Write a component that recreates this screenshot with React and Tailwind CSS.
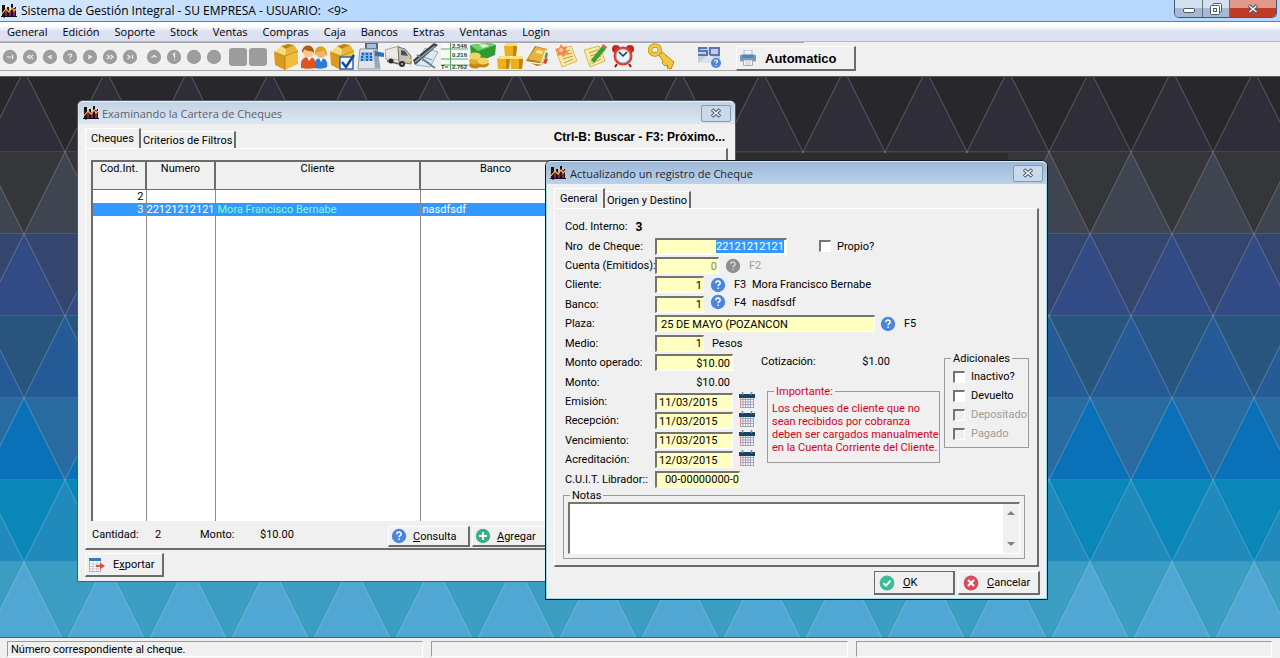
import React, { useEffect, useRef } from "react";

const menus = [
  "General",
  "Edición",
  "Soporte",
  "Stock",
  "Ventas",
  "Compras",
  "Caja",
  "Bancos",
  "Extras",
  "Ventanas",
  "Login",
];

/* Desktop rows, from top to bottom: [triangle pointing down, triangle pointing up] */
const rows = [
  ["#28272b", "#2f2d37"],
  ["#343639", "#3e4450"],
  ["#34466e", "#324b85"],
  ["#29547e", "#245a96"],
  ["#2a6ca2", "#0a71b8"],
  ["#0a87b8", "#218abd"],
  ["#3b9dc2", "#50a7d3"],
];

const raised =
  "border-t border-l border-b-2 border-r-2 border-t-white border-l-white border-b-[#6b6b6b] border-r-[#6b6b6b]";
const sunken =
  "border-t-2 border-l-2 border-b border-r border-t-[#76756c] border-l-[#76756c] border-b-white border-r-white";

/* ---------- icons ---------- */

const AppIcon = () => (
  <svg viewBox="0 0 16 16" className="w-4 h-4 shrink-0" aria-hidden="true">
    <path d="M1 2h3v11H1zM6 4h2v9H6zM10 1h2v12h-2zM14 4h1v9h-1z" fill="#1b1014" />
    <path d="M4 6h2v7H4zM8 7h2v6H8zM12 5h2v8h-2z" fill="#8d1f63" />
    <path d="M0 13.5h16" stroke="#1b1014" />
    <path d="M1 11l4-5 3 3 3-4 2 3 2-2" fill="none" stroke="#f2c12e" strokeWidth="1.2" />
    <path d="M3 10v5M11 11v3" stroke="#1b1014" />
  </svg>
);

const HelpIcon = ({ off }) => (
  <svg viewBox="0 0 16 16" className="w-4 h-4 shrink-0" aria-hidden="true">
    <circle cx="8" cy="8" r="7.2" fill={off ? "#8f8f8f" : "#4a86dc"} />
    <path
      d="M5.9 6.2c0-2.8 4.3-2.7 4.3-.2 0 1.6-2.1 1.6-2.1 3.2M8.1 10.6v1.5"
      fill="none"
      stroke={off ? "#d4d4d4" : "#fff"}
      strokeWidth="1.5"
    />
  </svg>
);

const PlusIcon = () => (
  <svg viewBox="0 0 16 16" className="w-4 h-4 shrink-0" aria-hidden="true">
    <circle cx="8" cy="8" r="7.2" fill="#35b183" />
    <path d="M8 4v8M4 8h8" stroke="#fff" strokeWidth="2" />
  </svg>
);

const CheckIcon = () => (
  <svg viewBox="0 0 16 16" className="w-4 h-4 shrink-0" aria-hidden="true">
    <circle cx="8" cy="8" r="7.4" fill="#3dba98" />
    <path d="M4.5 8.2l2.5 2.4 4.5-4.8" fill="none" stroke="#fff" strokeWidth="2" />
  </svg>
);

const CancelIcon = () => (
  <svg viewBox="0 0 16 16" className="w-4 h-4 shrink-0" aria-hidden="true">
    <circle cx="8" cy="8" r="7.4" fill="#dc4a5c" />
    <path d="M5 5l6 6M11 5l-6 6" stroke="#fff" strokeWidth="2.2" />
  </svg>
);

const ExportIcon = () => (
  <svg viewBox="0 0 16 14" className="w-4 h-3.5 shrink-0" aria-hidden="true">
    <rect x=".5" y=".5" width="11" height="13" fill="#fff" stroke="#a9b3bf" />
    <path d="M0 0h12v3H0z" fill="#3a78c3" />
    <path d="M1 6h11M1 8.5h11M1 11h11M4 3v10M8 3v10" stroke="#b3bcc8" strokeWidth=".8" />
    <path d="M7 7h4V4.500l5 3.500-5 3.500V9H7z" fill="#d9523f" />
  </svg>
);

const CalendarIcon = () => (
  <svg viewBox="0 0 16 16" className="w-4 h-4 shrink-0" aria-hidden="true">
    <rect x="1" y="4" width="14" height="12" fill="#fbfbfd" />
    <path
      d="M1 7.500h14M1 10h14M1 12.500h14M1 15.500h14M4 6v10M6.500 6v10M9 6v10M11.500 6v10M14.500 6v10"
      stroke="#8d93ab"
      strokeWidth=".8"
    />
    <path d="M1.500 6v10" stroke="#d9908d" />
    <path d="M0 2h16v4H0z" fill="#164467" />
    <path d="M3.500 0v3M12.500 0v3" stroke="#7c8794" strokeWidth="1.500" />
  </svg>
);

const PrinterIcon = () => (
  <svg viewBox="0 0 16 16" className="w-4 h-4 shrink-0" aria-hidden="true">
    <path d="M4 0h8v5H4z" fill="#eef4fa" stroke="#8fa5bb" strokeWidth=".8" />
    <rect x="0" y="4.500" width="16" height="7" rx="1.500" fill="#7c98b4" />
    <path d="M2.500 5h11v3h-11z" fill="#4b86bf" />
    <path d="M3.500 10h9v5.500h-9z" fill="#f7fafc" stroke="#8fa5bb" strokeWidth=".8" />
    <path d="M5 12h6M5 14h6" stroke="#a9bac9" strokeWidth=".8" />
  </svg>
);

const CloseGlyph = () => (
  <svg viewBox="0 0 12 10" className="w-3 h-2.5" aria-hidden="true">
    <path d="M2 1.500l8 7M10 1.500l-8 7" stroke="#4d5967" strokeWidth="3.600" />
    <path d="M2.500 2l7 6M9.500 2l-7 6" stroke="#f4f7fa" strokeWidth="1.600" />
  </svg>
);

/* Glyphs of the disabled record navigation buttons */
const navGlyphs = [
  ["Primero", "M5 8h4M10.500 6v4"],
  ["Retroceder página", "M8 6L5.500 8 8 10M11 6L8.500 8l2.500 2"],
  ["Anterior", "M9 6.500L6.500 8 9 9.500z"],
  ["Buscar", "M6.500 6.500c0-2 3.200-2 3.200 0 0 1.200-1.600 1-1.600 2.500M8.100 10.500v1"],
  ["Siguiente", "M7 6.500L9.500 8 7 9.500z"],
  ["Avanzar página", "M5 6l2.500 2L5 10M8.500 6L11 8l-2.500 2"],
  ["Último", "M5.500 6L8 8l-2.500 2M10.500 6v4"],
  ["Insertar", "M5.500 8.500L8 6.500l2.500 2"],
  ["Modificar", "M7 6l1.500-1.500V9M8.500 10.500v1"],
  ["Borrar", ""],
  ["Salir", ""],
];

const NavButton = ({ label, d, className }) => (
  <button type="button" aria-label={label} disabled className={className}>
    <svg viewBox="0 0 16 16" className="w-4 h-4">
      <circle cx="8.500" cy="8.500" r="7.200" fill="#fff" />
      <circle cx="8" cy="8" r="7.200" fill="#9d9d9d" />
      <path d={d} fill="none" stroke="#f2f2f2" strokeWidth="1.200" />
    </svg>
  </button>
);

const BoxArt = () => (
  <>
    <path d="M1 9l11 4v14L2 22z" fill="#d99a1d" />
    <path d="M12 13l13-5v13l-13 6z" fill="#f1bd3f" />
    <path d="M1 9L8 3l5 3-1 7z" fill="#f9db7e" />
    <path d="M12 13l1-7 8-4 4 6z" fill="#ecb437" />
    <path d="M8 3l7-2 6 1-8 4z" fill="#c0830f" />
    <path d="M1 9l11 4 13-5M12 13v14" fill="none" stroke="#b27810" strokeWidth=".7" />
  </>
);

const Cube = ({ x, y }) => (
  <g transform={`translate(${x} ${y})`}>
    <path d="M0 3l3-3h9l1 3-1 10H1z" fill="#eab01d" />
    <path d="M0 3l3-3h9l1 3z" fill="#fbe07a" />
    <path d="M9 3h4l-1 10H9z" fill="#bf860c" />
  </g>
);

const Note = () => (
  <>
    <path d="M3 7l15-4 6 15-15 6z" fill="#f9eaa8" stroke="#dcb94e" />
    <path d="M8 10l9-3M9 13l10-3M10 16l10-3M11 20l9-4" stroke="#b79a48" />
  </>
);

const Key = ({ fill, stroke }) => (
  <>
    <path d="M10 11l3-3 13 11-3 7-4-1 1-3-3 1-3-3 1-2z" fill={fill} stroke={stroke} />
    <ellipse cx="7" cy="7" rx="5" ry="4.500" fill="none" stroke={stroke} strokeWidth="4.500" />
    <ellipse cx="7" cy="7" rx="5" ry="4.500" fill="none" stroke={fill} strokeWidth="3" />
  </>
);

const tools = [
  { label: "Artículos", art: <BoxArt /> },
  {
    label: "Clientes",
    art: (
      <>
        <path d="M14 25c-1-7 1-10 6-10s7 4 6 9c-3 2-9 2-12 1z" fill="#2f7cd0" />
        <circle cx="20" cy="10" r="5" fill="#f0b56a" />
        <path d="M14 13c-2-13 13-13 12 0-2-1-2-5-3-6-3 2-6 2-7 2z" fill="#e0a020" />
        <path d="M0 25c-1-8 2-11 8-11s7 4 6 11c-4 1-10 1-14 0z" fill="#de5223" />
        <circle cx="7.500" cy="9" r="5.500" fill="#f9c88c" />
        <path d="M1 10C0 0 14 0 13 10c-2-3-8-1-9-4z" fill="#b55a18" />
        <path d="M6 14l2 4 3-4M18 15l2 4 2-4" fill="#fff" />
      </>
    ),
  },
  {
    label: "Pedidos",
    art: (
      <>
        <BoxArt />
        <rect x="11" y="14" width="13" height="12" fill="#f6f9fd" stroke="#2f67b1" strokeWidth="1.500" />
        <path d="M13 19l4 5 8-12" fill="none" stroke="#0f4a9b" strokeWidth="2.500" />
      </>
    ),
  },
  {
    label: "Caja registradora",
    art: (
      <>
        <path d="M8 0h13v7H8z" fill="#5d6975" />
        <path d="M10 1h9v4h-9z" fill="#9fc1dc" />
        <path d="M3 6h17l3 20H1z" fill="#e0e4e8" stroke="#8d99a5" />
        <path d="M16 7h4l3 18h-5z" fill="#9aa7b3" />
        <path d="M4 9h11l1 9H3z" fill="#7fb2e2" />
        <path d="M5 11h2m2 0h2m2 0h2M4 14h2m3 0h2m2 0h2M4 17h2m3 0h2m2 0h2" stroke="#1c5fae" strokeWidth="1.800" />
        <path d="M18 8l9 2v4l-9-1z" fill="#2f74bb" />
      </>
    ),
  },
  {
    label: "Repartos",
    art: (
      <>
        <path d="M0 7l14-4v14L1 16z" fill="#ebe9e2" stroke="#a7a397" />
        <path d="M13 4l7 2 6 7v8l-12-2z" fill="#c7c2b4" stroke="#77736a" />
        <path d="M16 7l4 1 3 5-7-1z" fill="#42505b" />
        <path d="M2 17l13 3v2L2 19z" fill="#77736a" />
        <circle cx="6" cy="18" r="2.500" fill="#2c2c2c" />
        <circle cx="17" cy="21" r="3" fill="#2c2c2c" />
        <circle cx="17" cy="21" r="1" fill="#c9c9c9" />
        <path d="M22 17h4" stroke="#f0d35f" strokeWidth="2" />
      </>
    ),
  },
  {
    label: "Remitos",
    art: (
      <>
        <path d="M3 22L12 5l13 4-8 15z" fill="#dde7f0" stroke="#9badbf" />
        <path d="M11 14l8 3M9 17l8 3" stroke="#7894ad" />
        <path d="M0 17L21 0l4 2L2 22z" fill="#3d4248" />
        <path d="M2 19L22 3" stroke="#a3abb3" strokeWidth="1.500" />
        <path d="M4 12l18 13" stroke="#5b86a8" strokeWidth="2" />
      </>
    ),
  },
  {
    label: "Totales",
    art: (
      <>
        <rect width="27" height="27" fill="#f7fbf7" />
        <path d="M0 6h27M0 16h27M0 22h27M9.500 0v27" stroke="#5aa468" strokeWidth="1" />
        <g fontFamily="Liberation Sans, sans-serif" fontSize="6" fontWeight="700" fill="#2d3a30">
          <text x="11" y="5">2.546</text>
          <text x="11" y="14">0.216</text>
          <text x="0" y="26">T=</text>
          <text x="11" y="26">2.762</text>
        </g>
      </>
    ),
  },
  {
    label: "Cobranzas",
    art: (
      <>
        <path d="M1 2l20-2 6 2-1 10-14 6-10-5z" fill="#2e9a34" />
        <path d="M1 2l20-2 6 2-18 6z" fill="#6fd068" />
        <path d="M10 2l6-1 4 2-6 2z" fill="#dff5da" />
        <ellipse cx="6" cy="22" rx="6" ry="3.500" fill="#c3890f" />
        <ellipse cx="6" cy="18" rx="6" ry="3.500" fill="#e2ae2a" />
        <ellipse cx="6" cy="13" rx="6" ry="3.500" fill="#f4d366" />
        <ellipse cx="14" cy="21" rx="6" ry="3.500" fill="#c3890f" />
        <ellipse cx="14" cy="18" rx="6" ry="3.500" fill="#f4d366" />
      </>
    ),
  },
  {
    label: "Depósitos",
    art: (
      <>
        <Cube x={7} y={0} />
        <Cube x={0} y={13} />
        <Cube x={13} y={13} />
      </>
    ),
  },
  {
    label: "Agenda",
    art: (
      <>
        <path d="M20 9l3 1-1 5h-2z" fill="#4aa53c" />
        <path d="M20 15l3 1-2 5-3-1z" fill="#d84327" />
        <path d="M1 18L10 3l12 3-5 16-5 1z" fill="#b77c15" />
        <path d="M3 16l8-12 10 2-5 13z" fill="#e8b43c" />
        <path d="M12 7l6 1-1 3-6-1z" fill="#fae7a5" />
        <path d="M2 19l14 2 5-14" fill="none" stroke="#fbf2d4" strokeWidth="1.500" />
      </>
    ),
  },
  {
    label: "Novedades",
    art: (
      <>
        <Note />
        <path d="M8 1l2 3 4-1-1 4 3 3-4 1-1 3-3-2-4 1 1-4-3-3 4-1z" fill="#f28a4a" />
        <circle cx="8" cy="7" r="2" fill="#f9c9a5" />
      </>
    ),
  },
  {
    label: "Notas",
    art: (
      <>
        <Note />
        <path d="M21 3l4 3-12 14-5 2 2-5z" fill="#3f9e39" />
        <path d="M21 3l1-2 4 3-1 2z" fill="#e0524b" />
        <path d="M10 17l3 3-5 2z" fill="#f2d6a0" />
      </>
    ),
  },
  {
    label: "Alarmas",
    art: (
      <>
        <circle cx="7" cy="6" r="4" fill="#c7271b" />
        <circle cx="21" cy="6" r="4" fill="#c7271b" />
        <path d="M8 21l-2 3M20 21l2 3" stroke="#7d1a12" strokeWidth="2" />
        <circle cx="14" cy="13" r="9.500" fill="#df3b2b" />
        <circle cx="14" cy="13" r="7" fill="#e9f5fd" stroke="#8ab0cb" />
        <path d="M10 9l4 4 4-4" fill="none" stroke="#24303a" strokeWidth="1.500" />
      </>
    ),
  },
];

/* Title bar with its close button, shared by both windows */
const TitleBar = ({ title, active }) => (
  <div
    className={
      active
        ? "flex items-center h-[23px] pl-1 pr-1 gap-1 rounded-t-md border-t border-[#dfeaf5] bg-linear-to-b from-[#9db8d6] to-[#bbd2ec] text-[#1d2733]"
        : "flex items-center h-[23px] pl-[5px] pr-1 gap-[3px] rounded-t-md border-t border-[#eef4fa] bg-linear-to-b from-[#c3d3e2] to-[#dce7f3] text-[#5a626c]"
    }
  >
    <AppIcon />
    <h2 className="font-['Open_Sans',sans-serif] text-[11px] whitespace-nowrap grow">{title}</h2>
    <button
      type="button"
      aria-label="Cerrar"
      className="w-[30px] h-[17px] flex items-center justify-center border border-[#8597ab] rounded-xs bg-[#c9daec]"
    >
      <CloseGlyph />
    </button>
  </div>
);

const Tabs = ({ first, second, firstWidth }) => (
  <div role="tablist" className="flex items-end">
    <button
      type="button"
      role="tab"
      aria-selected="true"
      className={`${firstWidth} h-5 text-left pl-[5px] border-t border-l border-r-2 border-t-white border-l-white border-r-[#6b6b6b]`}
    >
      {first}
    </button>
    <button
      type="button"
      role="tab"
      aria-selected="false"
      className="h-[17px] px-0.5 border-t border-r-2 border-t-white border-r-[#6b6b6b]"
    >
      {second}
    </button>
  </div>
);

const Row = ({ label, id, children }) => (
  <div className="flex-1 min-h-0 flex items-center">
    <label htmlFor={id} className="w-[90px] shrink-0 whitespace-pre">
      {label}
    </label>
    {children}
  </div>
);

const Field = ({ className, ...props }) => (
  <input
    type="text"
    className={`h-[17px] bg-[#ffffc1] outline-none ${sunken} ${className}`}
    {...props}
  />
);

const Check = ({ label, disabled, className }) => (
  <label
    className={`flex items-center gap-1.5 ${disabled ? "text-[#9c9c9c]" : ""} ${className || ""}`}
  >
    <input
      type="checkbox"
      disabled={disabled}
      className={`appearance-none w-3 h-3 shrink-0 ${sunken} ${disabled ? "bg-[#f0f0f0]" : "bg-white"}`}
    />
    {label}
  </label>
);

const DateRow = ({ label, id, value }) => (
  <Row label={label} id={id}>
    <Field id={id} defaultValue={value} className="w-[78px] pl-0.5" />
    <button type="button" aria-label={`Calendario ${label}`} className="ml-1.5 mb-1">
      <CalendarIcon />
    </button>
  </Row>
);

const Wallpaper = () => (
  <svg className="absolute inset-0 w-full h-full" aria-hidden="true">
    <defs>
      <pattern id="triangles" x="24" y="-7" width="82" height="574" patternUnits="userSpaceOnUse">
        {rows.map(([down, up], i) => {
          const y = i * 82;
          const b = y + 82;
          const shape =
            i % 2 === 0
              ? `M0 ${y}L41 ${b}H-41ZM82 ${y}L123 ${b}H41Z`
              : `M41 ${y}L82 ${b}H0Z`;
          return (
            <g key={down}>
              <rect y={y} width="82" height="82" fill={down} />
              <path d={shape} fill={up} stroke="#fff" strokeOpacity=".22" />
            </g>
          );
        })}
      </pattern>
    </defs>
    <rect width="100%" height="100%" fill="url(#triangles)" />
    <rect x="700" y="76" width="308" height="8" fill="#2d2d2d" />
  </svg>
);

const ChequesWindow = () => (
  <section className="absolute left-[77px] top-[23px] w-[659px] h-[482px] flex flex-col border border-[#4f5863] rounded-t-md bg-[#f0f0f0]">
    <TitleBar title="Examinando la Cartera de Cheques" />
    <div className="grow flex flex-col px-[7px] pt-1 pb-1">
      <div className="flex items-end justify-between">
        <Tabs first="Cheques" second="Criterios de Filtros" firstWidth="w-[56px]" />
        <div className="font-['Liberation_Sans',Arial,sans-serif] font-bold text-xs pr-[3px] pb-[3px]">
          Ctrl-B: Buscar - F3: Próximo...
        </div>
      </div>
      <div className={`grow flex flex-col px-[5px] pt-[11px] ${raised}`}>
        <div className="grow bg-white border-t-2 border-l-2 border-[#6b6b6b]">
          <table className="w-full h-full table-fixed border-collapse">
            <colgroup>
              <col className="w-[53px]" />
              <col className="w-[69px]" />
              <col className="w-[205px]" />
              <col className="w-[151px]" />
              <col />
            </colgroup>
            <thead>
              <tr className="h-[27px] bg-[#f0f0f0] align-top">
                {["Cod.Int.", "Numero", "Cliente", "Banco", ""].map((h) => (
                  <th key={h} className="font-normal border-r-2 border-b border-[#6b6b6b]">
                    {h}
                  </th>
                ))}
              </tr>
            </thead>
            <tbody>
              <tr className="h-[13px]">
                <td className="text-right pr-0.5 border-r border-[#8a8a8a]">2</td>
                <td className="border-r border-[#8a8a8a]"></td>
                <td className="border-r border-[#8a8a8a]"></td>
                <td className="border-r border-[#8a8a8a]"></td>
                <td></td>
              </tr>
              <tr className="h-[13px] bg-[#3399ff] text-white">
                <td className="text-right pr-0.5 border-r border-[#8a8a8a]">3</td>
                <td className="text-right pr-px border-r border-[#8a8a8a]">22121212121</td>
                <td className="pl-0.5 text-[#7dffc0] border-r border-[#8a8a8a]">
                  Mora Francisco Bernabe
                </td>
                <td className="pl-0.5 border-r border-[#8a8a8a]">nasdfsdf</td>
                <td></td>
              </tr>
              <tr className="h-full">
                <td className="border-r border-[#8a8a8a]"></td>
                <td className="border-r border-[#8a8a8a]"></td>
                <td className="border-r border-[#8a8a8a]"></td>
                <td className="border-r border-[#8a8a8a]"></td>
                <td></td>
              </tr>
            </tbody>
          </table>
        </div>
        <div className="flex h-[27px] items-center pl-px">
          <span className="w-[63px]">Cantidad:</span>
          <span className="w-[45px]">2</span>
          <span className="w-[60px]">Monto:</span>
          <span className="w-32">$10.00</span>
          <button
            type="button"
            className={`flex items-center gap-1.5 w-[82px] h-[21px] pl-0.5 mt-1 ${raised}`}
          >
            <HelpIcon />
            <span>
              <u>C</u>onsulta
            </span>
          </button>
          <button
            type="button"
            className={`flex items-center gap-1.5 w-[82px] h-[21px] pl-0.5 mt-1 ml-0.5 ${raised}`}
          >
            <PlusIcon />
            <span>
              <u>A</u>gregar
            </span>
          </button>
        </div>
      </div>
      <button
        type="button"
        className={`flex items-center gap-2 w-[79px] h-6 pl-[3px] mt-[3px] ${raised}`}
      >
        <ExportIcon />
        <span>
          E<u>x</u>portar
        </span>
      </button>
    </div>
  </section>
);

const ChequeForm = () => {
  const numero = useRef(null);

  useEffect(() => {
    numero.current.focus();
    numero.current.select();
  }, []);

  return (
    <form
      onSubmit={(e) => e.preventDefault()}
      className="absolute left-[545px] top-[83px] w-[503px] h-[440px] flex flex-col border border-[#10181f] rounded-t-md bg-[#f0f0f0]"
    >
      <TitleBar title="Actualizando un registro de Cheque" active />
      <div className="grow flex flex-col px-[7px] pt-1 pb-[3px] border-x border-b border-[#9fdcea]">
        <Tabs first="General" second="Origen y Destino" firstWidth="w-[51px]" />
        <div className={`grow flex flex-col pl-2.5 pr-2.5 pt-2 ${raised}`}>
          <div className="h-[136px] flex flex-col">
            <div className="flex-1 flex items-center gap-2">
              <span>Cod. Interno:</span>
              <b className="text-xs">3</b>
            </div>
            <Row label="Nro  de Cheque:" id="numero">
              <input
                ref={numero}
                id="numero"
                type="text"
                defaultValue="22121212121"
                className={`w-[132px] h-[17px] pr-0.5 text-right bg-[#ffffc1] outline-none selection:bg-[#3399ff] selection:text-white ${sunken}`}
              />
              <Check label="Propio?" className="ml-8" />
            </Row>
            <Row label="Cuenta (Emitidos):" id="cuenta">
              <Field id="cuenta" defaultValue="0" disabled className="w-16 text-right text-[#8b8b6e] pr-px" />
              <button type="button" aria-label="Buscar cuenta" disabled className="ml-1.5">
                <HelpIcon off />
              </button>
              <span className="ml-2 text-[#9c9c9c]">F2</span>
            </Row>
            <Row label="Cliente:" id="cliente">
              <Field id="cliente" defaultValue="1" className="w-[49px] text-right pr-px" />
              <button type="button" aria-label="Buscar cliente" className="ml-1.5">
                <HelpIcon />
              </button>
              <span className="ml-2 w-[18px]">F3</span>
              <span>Mora Francisco Bernabe</span>
            </Row>
            <Row label="Banco:" id="banco">
              <Field id="banco" defaultValue="1" className="w-[49px] text-right pr-px" />
              <button type="button" aria-label="Buscar banco" className="ml-1.5 mb-1">
                <HelpIcon />
              </button>
              <span className="ml-2 w-[18px] mb-1">F4</span>
              <span className="mb-1">nasdfsdf</span>
            </Row>
            <Row label="Plaza:" id="plaza">
              <Field id="plaza" defaultValue="25 DE MAYO (POZANCON" className="w-[220px] pl-1" />
              <button type="button" aria-label="Buscar plaza" className="ml-[5px]">
                <HelpIcon />
              </button>
              <span className="ml-2">F5</span>
            </Row>
            <Row label="Medio:" id="medio">
              <Field id="medio" defaultValue="1" className="w-[49px] text-right pr-px" />
              <span className="ml-2">Pesos</span>
            </Row>
          </div>

          <div className="h-[136px] flex">
            <div className="w-[202px] shrink-0 flex flex-col">
              <Row label="Monto operado:" id="operado">
                <Field id="operado" defaultValue="$10.00" className="w-[78px] text-right pr-0.5" />
              </Row>
              <Row label="Monto:">
                <span className="w-[75px] text-right">$10.00</span>
              </Row>
              <DateRow label="Emisión:" id="emision" value="11/03/2015" />
              <DateRow label="Recepción:" id="recepcion" value="11/03/2015" />
              <DateRow label="Vencimiento:" id="vencimiento" value="11/03/2015" />
              <DateRow label="Acreditación:" id="acreditacion" value="12/03/2015" />
              <Row label="C.U.I.T. Librador::" id="cuit">
                <Field id="cuit" defaultValue="00-00000000-0" className="w-[85px] text-right" />
              </Row>
            </div>

            <div className="w-[173px] shrink-0 flex flex-col">
              <div className="h-4 w-[129px] -ml-1.5 flex items-center justify-between">
                <span>Cotización:</span>
                <span>$1.00</span>
              </div>
              <fieldset className="mt-4 h-[78px] min-w-0 px-1 border border-[#9a9a9a] text-[#d8001c]">
                <legend className="px-0.5 ml-0.5 leading-[13px]">Importante:</legend>
                <p className="pt-1 leading-[13px] whitespace-nowrap">
                  Los cheques de cliente que no
                  <br />
                  sean recibidos por cobranza
                  <br />
                  deben ser cargados manualmente
                  <br />
                  en la Cuenta Corriente del Cliente.
                </p>
              </fieldset>
            </div>

            <fieldset className="w-[85px] min-w-0 shrink-0 h-24 ml-1 -mt-px px-2 border border-[#9a9a9a] flex flex-col">
              <legend className="-ml-0.5 px-0.5 leading-[13px]">Adicionales</legend>
              <Check label="Inactivo?" className="h-[19px] mt-0.5" />
              <Check label="Devuelto" className="h-[19px]" />
              <Check label="Depositado" disabled className="h-[19px]" />
              <Check label="Pagado" disabled className="h-[19px]" />
            </fieldset>
          </div>

          <fieldset className="-ml-0.5 mr-0.5 px-1 pb-1 border border-[#9a9a9a]">
            <legend className="ml-0.5 px-0.5 leading-[13px]">
              <label htmlFor="notas">Notas</label>
            </legend>
            <div className={`flex h-[52px] bg-white ${sunken}`}>
              <textarea id="notas" className="grow resize-none outline-none" />
              <div className="w-4 bg-[#f0f0f0] flex flex-col items-center justify-between py-1.5">
                <svg viewBox="0 0 8 5" className="w-2 h-[5px]" aria-hidden="true">
                  <path d="M0 5l4-4 4 4z" fill="#808080" />
                </svg>
                <svg viewBox="0 0 8 5" className="w-2 h-[5px]" aria-hidden="true">
                  <path d="M0 0l4 4 4-4z" fill="#808080" />
                </svg>
              </div>
            </div>
          </fieldset>
        </div>

        <div className="flex justify-end gap-[3px] mt-1 -mr-px">
          <button
            type="submit"
            className="flex items-center gap-2 w-[81px] h-6 pl-1 border border-[#6b6b6b] border-b-2 border-r-2"
          >
            <CheckIcon />
            <span>
              <u>O</u>K
            </span>
          </button>
          <button type="button" className={`flex items-center gap-2 w-[82px] h-6 pl-1 ${raised}`}>
            <CancelIcon />
            <span>
              <u>C</u>ancelar
            </span>
          </button>
        </div>
      </div>
    </form>
  );
};

const Toolbar = () => (
  <div className="h-[34px] flex items-start bg-[#f0f0f0]">
    <div className="flex items-center h-[29px] border-t border-b border-[#a5a5a5] w-[804px] shrink-0 pl-0.5">
      <div className="flex gap-1">
        {navGlyphs.map(([label, d], i) => (
          <NavButton key={label} label={label} d={d} className={i === 7 ? "ml-1" : ""} />
        ))}
      </div>
      <div className="flex gap-0.5 ml-[7px]">
        <button type="button" aria-label="Cortar" disabled className="w-[18px] h-[18px] rounded-[3px] bg-[#9d9d9d]" />
        <button type="button" aria-label="Pegar" disabled className="w-[18px] h-[18px] rounded-[3px] bg-[#9d9d9d]" />
      </div>
      <div className="flex gap-px ml-1.5">
        {tools.map((t) => (
          <button key={t.label} type="button" aria-label={t.label} className="w-[27px] h-[27px]">
            <svg viewBox="0 0 27 27" className="w-full h-full">
              {t.art}
            </svg>
          </button>
        ))}
      </div>
      <button type="button" aria-label="Claves" className="ml-3 w-[27px] h-[27px]">
        <svg viewBox="0 0 27 27" className="w-full h-full">
          <Key fill="#f3c840" stroke="#b98a13" />
        </svg>
      </button>
      <button type="button" aria-label="Ayuda" className="ml-5 w-[27px] h-[27px]">
        <svg viewBox="0 0 27 27" className="w-full h-full">
          <path d="M3 4h22v16H3z" fill="#c3cedb" />
          <path d="M3 20l11-9 11 9" fill="#dbe3ec" />
          <path d="M12 5H4v3h8v4H3M15 12V5h9v7h-9" fill="none" stroke="#5c74b4" strokeWidth="2" />
          <circle cx="21" cy="20" r="5" fill="#4a86dc" />
          <path d="M19.500 18.500c0-2 3-2 3 0 0 1-1.500 1-1.500 2M21 22v1" fill="none" stroke="#fff" strokeWidth="1.200" />
        </svg>
      </button>
    </div>
    <button
      type="button"
      className={`flex items-center gap-[9px] w-[120px] h-[25px] pl-[3px] mt-1 -ml-[68px] shrink-0 bg-[#f0f0f0] font-['Liberation_Sans',Arial,sans-serif] font-bold text-[13px] ${raised}`}
    >
      <PrinterIcon />
      Automatico
    </button>
  </div>
);

const panel =
  "flex-1 h-4 pl-[3px] leading-[15px] border border-t-[#9a9a9a] border-l-[#9a9a9a] border-b-white border-r-white";

export default function App() {
  return (
    <div className="h-screen flex flex-col overflow-hidden bg-[#f0f0f0] font-[Roboto,Arial,sans-serif] text-[11px] leading-[13px] text-black">
      <header className="h-[22px] flex items-start bg-linear-to-r from-[#d6e9fc] via-[#b6d8fc] via-30% to-[#b6d8fc] border-b border-[#5f7e9e]">
        <div className="flex items-center gap-1 pl-px h-[21px] grow">
          <AppIcon />
          <h1 className="font-['Open_Sans',sans-serif] text-xs whitespace-pre">
            Sistema de Gestión Integral - SU EMPRESA - USUARIO:  {"<9>"}
          </h1>
        </div>
        <div className="flex h-[18px] mr-[3px] border border-t-0 border-[#46566a] rounded-b-[5px] overflow-hidden">
          <button
            type="button"
            aria-label="Minimizar"
            className="w-7 flex items-end justify-center pb-1 border-r border-[#5f7085] bg-linear-to-b from-[#d3e1ef] from-45% to-[#a5bad0] to-50%"
          >
            <span className="w-3 h-[5px] border border-[#4d5967] bg-white rounded-xs" />
          </button>
          <button
            type="button"
            aria-label="Restaurar"
            className="w-[27px] flex items-center justify-center border-r border-[#5f7085] bg-linear-to-b from-[#d3e1ef] from-45% to-[#a5bad0] to-50%"
          >
            <svg viewBox="0 0 12 12" className="w-3 h-3">
              <rect x="3" y=".5" width="8.500" height="8.500" rx="1" fill="#fff" stroke="#4d5967" />
              <rect x=".5" y="2.500" width="9" height="9" rx="1" fill="#fff" stroke="#4d5967" />
              <rect x="3.500" y="5.500" width="3" height="3" fill="#fff" stroke="#4d5967" />
            </svg>
          </button>
          <button
            type="button"
            aria-label="Cerrar"
            className="w-[46px] flex items-center justify-center bg-linear-to-b from-[#e09a8c] from-45% to-[#c23c25] to-50%"
          >
            <CloseGlyph />
          </button>
        </div>
      </header>

      <nav className="h-5 flex items-center gap-[15px] pl-[7px] border-b border-[#b5b9cc] bg-linear-to-b from-white from-20% to-[#dde2f2] to-50% font-['Open_Sans',sans-serif] text-[11px]">
        {menus.map((m) => (
          <button key={m} type="button">
            {m}
          </button>
        ))}
      </nav>

      <Toolbar />

      <main className="relative grow overflow-hidden border-t border-[#5b5b5b]">
        <Wallpaper />
        <ChequesWindow />
        <ChequeForm />
      </main>

      <footer className="h-[21px] flex gap-2 pl-[7px] pr-2 pt-[3px] border-t border-[#5b5b5b]">
        <div className={panel}>Número correspondiente al cheque.</div>
        <div className={panel}></div>
        <div className={panel}></div>
      </footer>
    </div>
  );
}
